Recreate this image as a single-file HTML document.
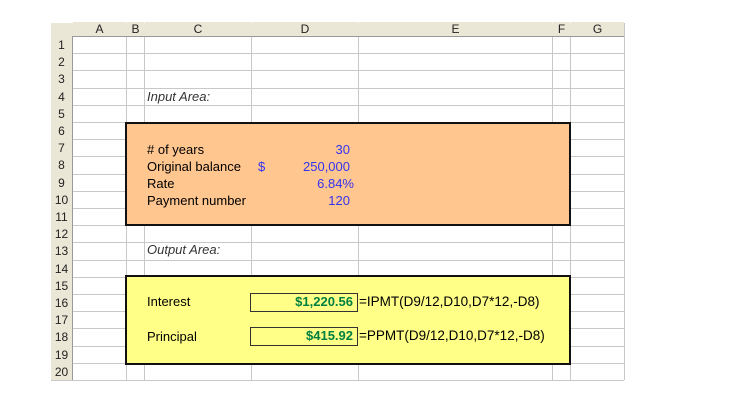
<!DOCTYPE html>
<html><head><meta charset="utf-8"><style>
body{margin:0;width:729px;height:408px;background:#fff;position:relative;overflow:hidden;font-family:"Liberation Sans",Arial,sans-serif;font-size:13px;color:#000}
.a{position:absolute;white-space:nowrap}
.h{background:#ebe7d6;text-align:center;color:#222;font-size:12px}
.n{color:#3333ee}
</style></head><body>
<svg class="a" style="left:0;top:0" width="729" height="408">
<g stroke="#c8c8c8" stroke-width="1">
<line x1="72.5" y1="36" x2="72.5" y2="380"/><line x1="126.5" y1="23" x2="126.5" y2="380"/><line x1="144.5" y1="23" x2="144.5" y2="380"/><line x1="251.5" y1="23" x2="251.5" y2="380"/><line x1="358.5" y1="23" x2="358.5" y2="380"/><line x1="552.5" y1="23" x2="552.5" y2="380"/><line x1="570.5" y1="23" x2="570.5" y2="380"/><line x1="624.5" y1="23" x2="624.5" y2="380"/>
</g>
<g id="rows" stroke="#c8c8c8"></g>
</svg>
<div class="a h" style="left:51px;top:23px;width:573px;height:13px;border-bottom:1px solid #999"></div>
<div class="a h" style="left:73px;top:22px;width:53px">A</div>
<div class="a h" style="left:127px;top:22px;width:17px">B</div>
<div class="a h" style="left:145px;top:22px;width:106px">C</div>
<div class="a h" style="left:252px;top:22px;width:106px">D</div>
<div class="a h" style="left:359px;top:22px;width:193px">E</div>
<div class="a h" style="left:553px;top:22px;width:17px">F</div>
<div class="a h" style="left:571px;top:22px;width:53px">G</div>
<div class="a" style="left:51px;top:36px;width:21px;height:344px;background:#ebe7d6;border-right:1px solid #999"></div>
<div id="rn"></div>
<div class="a" style="left:125px;top:122px;width:442px;height:100px;background:#ffc690;border:2px solid #111"></div>
<div class="a" style="left:125px;top:275px;width:442px;height:86px;background:#ffff88;border:2px solid #111"></div>
<div class="a" style="left:147px;top:89px;font-style:italic;color:#333">Input Area:</div>
<div class="a" style="left:147px;top:242px;font-style:italic;color:#333">Output Area:</div>
<div class="a" style="left:147px;top:142px">#&nbsp;of years</div>
<div class="a" style="left:147px;top:159px">Original balance</div>
<div class="a" style="left:147px;top:176px">Rate</div>
<div class="a" style="left:147px;top:193px">Payment number</div>
<div class="a n" style="left:258px;top:159px">$</div>
<div class="a n" style="left:260px;top:142px;width:90px;text-align:right">30</div>
<div class="a n" style="left:260px;top:159px;width:90px;text-align:right">250,000</div>
<div class="a n" style="left:260px;top:176px;width:94px;text-align:right">6.84%</div>
<div class="a n" style="left:260px;top:193px;width:90px;text-align:right">120</div>
<div class="a" style="left:147px;top:294px">Interest</div>
<div class="a" style="left:147px;top:329px">Principal</div>
<div class="a" style="left:250px;top:293px;width:106px;height:17px;border:1px solid #333"></div>
<div class="a" style="left:250px;top:327px;width:106px;height:17px;border:1px solid #333"></div>
<div class="a" style="left:250px;top:294px;width:103px;text-align:right;font-weight:bold;color:#008040">$1,220.56</div>
<div class="a" style="left:250px;top:328px;width:103px;text-align:right;font-weight:bold;color:#008040">$415.92</div>
<div class="a" style="left:359px;top:294px;font-size:13.5px">=IPMT(D9/12,D10,D7*12,-D8)</div>
<div class="a" style="left:359px;top:328px;font-size:13.5px">=PPMT(D9/12,D10,D7*12,-D8)</div>
<script>
var g=document.getElementById('rows'),rn=document.getElementById('rn'),s='',t='';
for(var i=1;i<=20;i++){var y=36+i*17.2;s+='<line x1="51" x2="624" y1="'+(Math.round(y)+.5)+'" y2="'+(Math.round(y)+.5)+'"/>';
t+='<div class="a h" style="left:51px;width:21px;top:'+Math.round(36+(i-1)*17.2+2)+'px">'+i+'</div>';}
g.innerHTML=s;rn.innerHTML=t;
</script>
</body></html>
